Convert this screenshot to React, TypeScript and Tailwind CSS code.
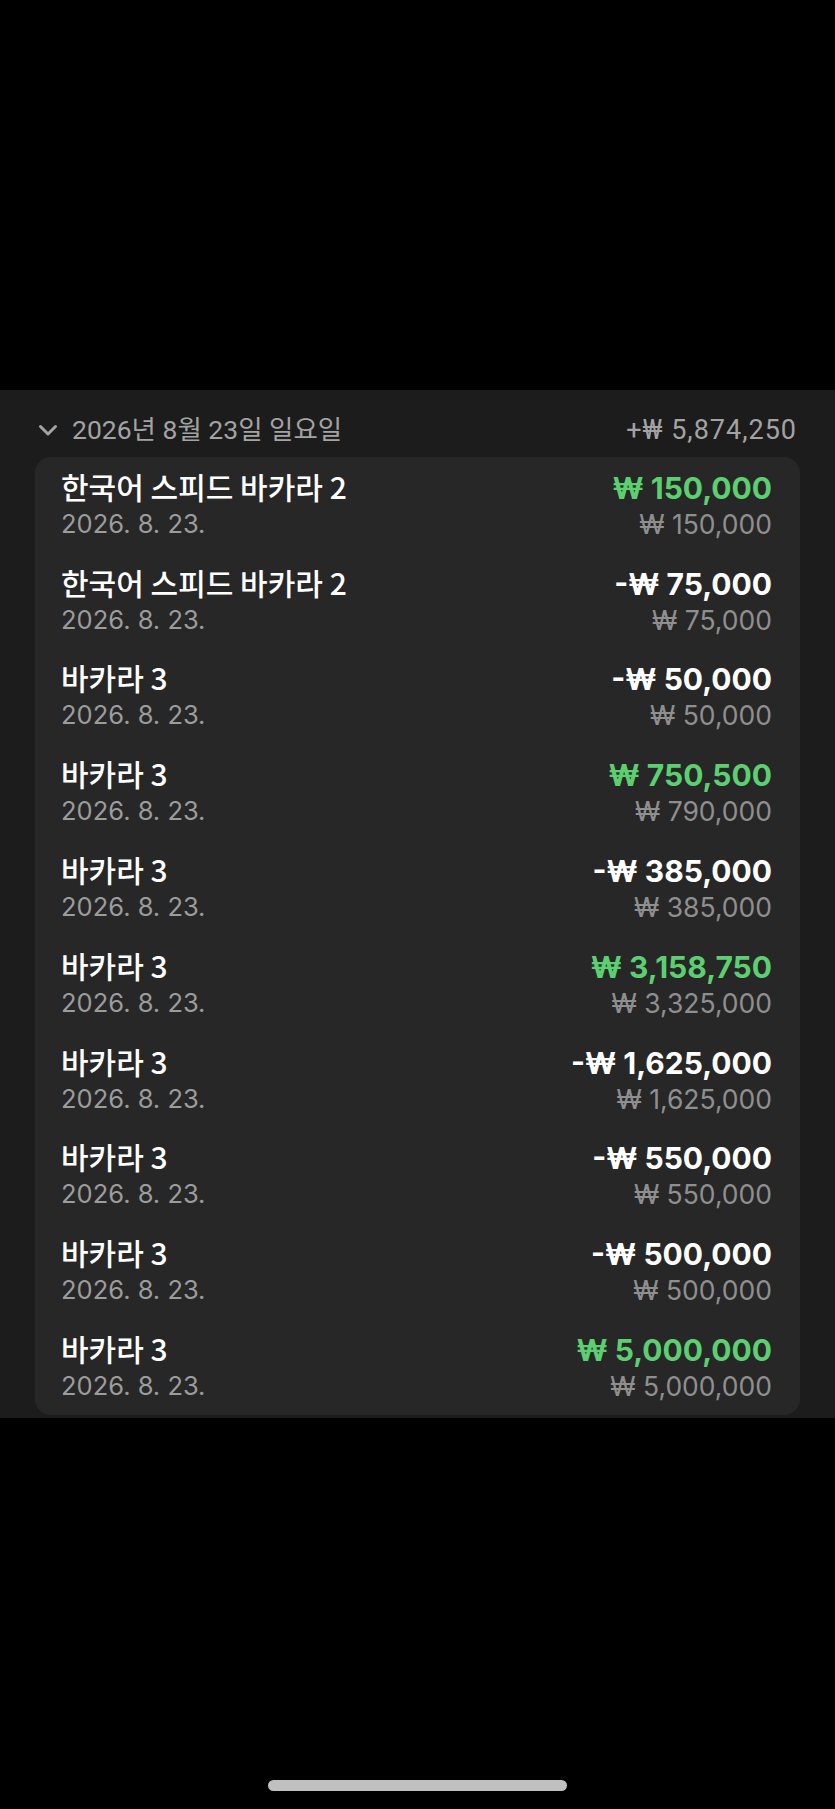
import React from "react";

type Row = { title: string; amount: string; win: boolean; sub: string };

const rows: Row[] = [
  { title: "한국어 스피드 바카라 2", amount: "₩ 150,000", win: true, sub: "₩ 150,000" },
  { title: "한국어 스피드 바카라 2", amount: "-₩ 75,000", win: false, sub: "₩ 75,000" },
  { title: "바카라 3", amount: "-₩ 50,000", win: false, sub: "₩ 50,000" },
  { title: "바카라 3", amount: "₩ 750,500", win: true, sub: "₩ 790,000" },
  { title: "바카라 3", amount: "-₩ 385,000", win: false, sub: "₩ 385,000" },
  { title: "바카라 3", amount: "₩ 3,158,750", win: true, sub: "₩ 3,325,000" },
  { title: "바카라 3", amount: "-₩ 1,625,000", win: false, sub: "₩ 1,625,000" },
  { title: "바카라 3", amount: "-₩ 550,000", win: false, sub: "₩ 550,000" },
  { title: "바카라 3", amount: "-₩ 500,000", win: false, sub: "₩ 500,000" },
  { title: "바카라 3", amount: "₩ 5,000,000", win: true, sub: "₩ 5,000,000" },
];

const kr = { fontFamily: '"Noto Sans CJK KR", "Noto Sans", sans-serif' };
const num = { fontFamily: 'Inter, "Noto Sans CJK KR", sans-serif' };
const hdr = { fontFamily: 'Roboto, "Noto Sans CJK KR", sans-serif' };

export default function App() {
  return (
    <div className="w-full h-[1809px] bg-black flex flex-col">
      <div className="h-[390px] shrink-0" />
      <div className="bg-[#1c1c1c] pb-[3px]">
        <div className="flex items-center justify-between pt-[26px] pb-[13px] pl-[38px] pr-[38px] h-[67px]">
          <div className="flex items-center">
            <svg width="20" height="13" viewBox="0 0 20 13" className="mr-[14px]">
              <path d="M2.5 2.5 L10 10 L17.5 2.5" fill="none" stroke="#a3a3a3" strokeWidth="3" strokeLinecap="round" strokeLinejoin="round" />
            </svg>
            <span className="text-[26.5px] leading-[28px] text-[#a3a3a3]" style={hdr}>
              2026년 8월 23일 일요일
            </span>
          </div>
          <span className="text-[27px] leading-[28px] text-[#a3a3a3] tracking-[1px]" style={hdr}>
            +₩ 5,874,250
          </span>
        </div>
        <div className="mx-[35px] rounded-[16px] bg-[#272727]">
          {rows.map((r, i) => (
            <div key={i} className="h-[95.8px] flex items-center justify-between pl-[26px] pr-[28px]">
              <div className="flex flex-col">
                <span className="text-[30px] leading-[38px] font-medium text-white -mt-[2px] mb-[2px]" style={kr}>
                  {r.title}
                </span>
                <span className="text-[25.5px] leading-[34px] text-[#9c9c9c]" style={num}>
                  2026. 8. 23.
                </span>
              </div>
              <div className="flex flex-col items-end">
                <span
                  className={`text-[30px] leading-[38px] font-bold ${r.win ? "text-[#5ccf70]" : "text-white"}`}
                  style={num}
                >
                  {r.amount}
                </span>
                <span className="text-[26.5px] leading-[34px] text-[#8f8f8f]" style={num}>
                  {r.sub}
                </span>
              </div>
            </div>
          ))}
        </div>
      </div>
      <div className="flex-1" />
      <div className="flex justify-center mb-[18px]">
        <div className="w-[299px] h-[11px] rounded-full bg-[#c0c0c0]" />
      </div>
    </div>
  );
}
